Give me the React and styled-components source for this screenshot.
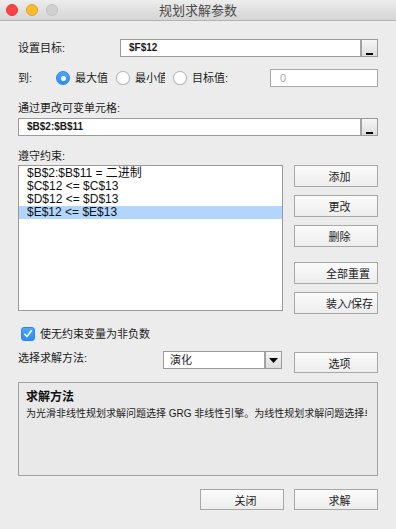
import React from 'react';
import styled, { createGlobalStyle } from 'styled-components';

const Global = createGlobalStyle`
  html, body { margin: 0; padding: 0; background: #ececec; }
  body {
    font-family: "Liberation Sans", "Noto Sans CJK SC", sans-serif;
    font-size: 11px;
    color: #1c1c1c;
  }
  * { box-sizing: border-box; }
`;

const Window = styled.div`
  width: 396px;
  height: 529px;
  background: #ececec;
  display: flex;
  flex-direction: column;
  overflow: hidden;
`;

const TitleBar = styled.div`
  flex: none;
  height: 21px;
  display: grid;
  grid-template-columns: 1fr auto 1fr;
  align-items: center;
  padding: 0 6px;
  background: linear-gradient(#ededed, #d5d5d5);
  border-bottom: 1px solid #b2b2b2;
`;

const Lights = styled.div`
  display: flex;
  gap: 8px;
  align-items: center;
`;

const Light = styled.span`
  width: 12px;
  height: 12px;
  border-radius: 50%;
  background: ${p => p.$c};
  border: 1px solid ${p => p.$b};
`;

const Title = styled.div`
  font-family: "Noto Sans CJK SC", sans-serif;
  font-size: 13px;
  line-height: 20px;
  color: #4b4b4b;
`;

const Content = styled.div`
  display: flex;
  flex-direction: column;
  padding: 0 18px;
`;

const FieldRow = styled.div`
  display: flex;
  align-items: ${p => p.$align || 'center'};
  height: ${p => p.$h || 18}px;
  margin-top: ${p => p.$mt || 0}px;
`;

const Label = styled.div`
  flex: none;
  width: ${p => (p.$w ? `${p.$w}px` : 'auto')};
  margin-top: ${p => p.$mt || 0}px;
  font-size: 11px;
  line-height: 14px;
  color: #1c1c1c;
  white-space: nowrap;
`;

const RefInput = styled.div`
  flex: 1;
  height: 18px;
  margin-top: ${p => p.$mt || 0}px;
  display: flex;
  background: #fff;
  border: 1px solid #9b9b9b;
`;

const RefText = styled.div`
  flex: 1;
  padding-left: 8px;
  font-size: 10px;
  font-weight: bold;
  line-height: 16px;
  color: #1a1a1a;
`;

const RefButton = styled.div`
  flex: none;
  width: 17px;
  display: flex;
  align-items: flex-end;
  justify-content: center;
  padding-bottom: 1px;
  border-left: 2px solid #a2a2a2;
  background: linear-gradient(#f6f6f6, #dddddd);
`;

const RefBar = styled.span`
  width: 7px;
  height: 2px;
  background: #000;
`;

const Option = styled.label`
  flex: none;
  width: ${p => p.$w}px;
  display: flex;
  align-items: center;
  gap: 5px;
  overflow: hidden;
`;

const Radio = styled.span`
  flex: none;
  width: 14px;
  height: 14px;
  border-radius: 50%;
  display: flex;
  align-items: center;
  justify-content: center;
  background: ${p => (p.$on ? 'linear-gradient(#4ea5fb, #2b8cf6)' : '#fff')};
  border: 1px solid ${p => (p.$on ? '#2d86e6' : '#b3b3b3')};
  box-shadow: 0 0.5px 1px rgba(0, 0, 0, 0.12);
`;

const RadioDot = styled.span`
  width: 5px;
  height: 5px;
  border-radius: 50%;
  background: #fff;
`;

const OptionText = styled.span`
  flex: none;
  max-width: ${p => (p.$max ? `${p.$max}px` : 'none')};
  overflow: hidden;
  white-space: nowrap;
  font-size: 11px;
  line-height: 14px;
`;

const ValueInput = styled.div`
  margin-left: auto;
  width: 108px;
  height: 18px;
  background: #fff;
  border: 1px solid #a9a9a9;
  padding-left: 9px;
  font-size: 11px;
  line-height: 16px;
  color: #a9a9a9;
`;

const ConstraintArea = styled.div`
  display: flex;
  align-items: flex-start;
  gap: 11px;
  margin-top: 2px;
`;

const ListBox = styled.div`
  width: 265px;
  height: 146px;
  background: #fff;
  border: 1px solid #9a9a9a;
  padding-top: 1px;
`;

const ListItem = styled.div`
  height: 13px;
  padding-left: 8px;
  font-size: 12px;
  line-height: 13px;
  color: #111;
  white-space: nowrap;
  background: ${p => (p.$sel ? '#b2d5fd' : 'transparent')};
`;

const ButtonColumn = styled.div`
  width: 84px;
  display: flex;
  flex-direction: column;
`;

const Button = styled.button`
  flex: none;
  width: 84px;
  height: ${p => p.$h || 22}px;
  margin: ${p => p.$mt || 0}px 0 0 ${p => (p.$push ? 'auto' : '0')};
  padding: 0 0 0 ${p => (p.$pl !== undefined ? p.$pl : 7)}px;
  display: flex;
  align-items: center;
  justify-content: ${p => (p.$pl !== undefined ? 'flex-start' : 'center')};
  font-family: inherit;
  font-size: 11px;
  color: #1c1c1c;
  white-space: nowrap;
  overflow: hidden;
  background: linear-gradient(#fbfbfb, #ededed);
  border: 1px solid #a7a7a7;
  border-radius: 0;
`;

const CheckRow = styled.label`
  display: flex;
  align-items: center;
  gap: 5px;
  height: 14px;
  margin-top: 13px;
  padding-left: 3px;
`;

const CheckBox = styled.span`
  flex: none;
  width: 14px;
  height: 14px;
  border-radius: 3px;
  display: flex;
  align-items: center;
  justify-content: center;
  background: linear-gradient(#4ea5fb, #2b8cf6);
  border: 1px solid #2d86e6;
`;

const Select = styled.div`
  flex: none;
  width: 119px;
  height: 18px;
  display: flex;
  background: #fff;
  border: 1px solid #9b9b9b;
`;

const SelectText = styled.div`
  flex: 1;
  padding-left: 6px;
  font-size: 11px;
  line-height: 16px;
`;

const SelectArrow = styled.div`
  flex: none;
  width: 17px;
  display: flex;
  align-items: center;
  justify-content: center;
  border-left: 2px solid #a2a2a2;
  background: linear-gradient(#f6f6f6, #dddddd);
`;

const GroupBox = styled.div`
  height: 94px;
  margin-top: 9px;
  padding: 6px 10px 0 7px;
  border: 1px solid #a3a3a3;
  background: #e9e9e9;
`;

const GroupTitle = styled.div`
  font-family: "Noto Sans CJK SC", sans-serif;
  font-size: 12px;
  font-weight: bold;
  line-height: 14px;
  color: #111;
`;

const GroupText = styled.div`
  margin-top: 4px;
  font-size: 10px;
  line-height: 14px;
  color: #1c1c1c;
  white-space: nowrap;
  overflow: hidden;
`;

const Footer = styled.div`
  display: flex;
  justify-content: flex-end;
  gap: 10px;
  margin-top: 13px;
`;

const constraints = [
  '$B$2:$B$11 = 二进制',
  '$C$12 <= $C$13',
  '$D$12 <= $D$13',
  '$E$12 <= $E$13',
];

function RefField({ value, mt }) {
  return (
    <RefInput $mt={mt}>
      <RefText>{value}</RefText>
      <RefButton>
        <RefBar />
      </RefButton>
    </RefInput>
  );
}

export default function App() {
  return (
    <>
      <Global />
      <Window>
        <TitleBar>
          <Lights>
            <Light $c="#fc4346" $b="#e2373b" />
            <Light $c="#fdbb2d" $b="#e3a21e" />
            <Light $c="#d0d0d0" $b="#c2c2c2" />
          </Lights>
          <Title>规划求解参数</Title>
          <span />
        </TitleBar>
        <Content>
          <FieldRow $mt={18}>
            <Label $w={102}>设置目标:</Label>
            <RefField value="$F$12" />
          </FieldRow>

          <FieldRow $mt={12}>
            <Label $w={38}>到:</Label>
            <Option $w={60}>
              <Radio $on>
                <RadioDot />
              </Radio>
              <OptionText>最大值</OptionText>
            </Option>
            <Option $w={57}>
              <Radio />
              <OptionText $max={30}>最小值</OptionText>
            </Option>
            <Option $w={60}>
              <Radio />
              <OptionText>目标值:</OptionText>
            </Option>
            <ValueInput>0</ValueInput>
          </FieldRow>

          <Label $mt={14}>通过更改可变单元格:</Label>
          <RefField value="$B$2:$B$11" mt={3} />

          <Label $mt={13}>遵守约束:</Label>
          <ConstraintArea>
            <ListBox>
              {constraints.map((c, i) => (
                <ListItem key={c} $sel={i === 3}>
                  {c}
                </ListItem>
              ))}
            </ListBox>
            <ButtonColumn>
              <Button>添加</Button>
              <Button $mt={8}>更改</Button>
              <Button $mt={8}>删除</Button>
              <Button $mt={15} $pl={31}>
                全部重置
              </Button>
              <Button $mt={8} $pl={31}>
                装入/保存
              </Button>
            </ButtonColumn>
          </ConstraintArea>

          <CheckRow>
            <CheckBox>
              <svg width="10" height="10" viewBox="0 0 10 10">
                <path
                  d="M1.8 5.3 L4 7.6 L8.3 1.8"
                  fill="none"
                  stroke="#fff"
                  strokeWidth="1.6"
                  strokeLinecap="round"
                  strokeLinejoin="round"
                />
              </svg>
            </CheckBox>
            <OptionText>使无约束变量为非负数</OptionText>
          </CheckRow>

          <FieldRow $mt={10} $h={22} $align="flex-start">
            <Label $w={145}>选择求解方法:</Label>
            <Select>
              <SelectText>演化</SelectText>
              <SelectArrow>
                <svg width="9" height="5" viewBox="0 0 9 5">
                  <path d="M0 0 H9 L4.5 5 Z" fill="#000" />
                </svg>
              </SelectArrow>
            </Select>
            <Button $h={21} $mt={1} $push>
              选项
            </Button>
          </FieldRow>

          <GroupBox>
            <GroupTitle>求解方法</GroupTitle>
            <GroupText>
              为光滑非线性规划求解问题选择 GRG 非线性引擎。为线性规划求解问题选择单纯线性规划引擎，并为非光滑规划求解问题选择演化引擎。
            </GroupText>
          </GroupBox>

          <Footer>
            <Button $h={21}>关闭</Button>
            <Button $h={21}>求解</Button>
          </Footer>
        </Content>
      </Window>
    </>
  );
}
